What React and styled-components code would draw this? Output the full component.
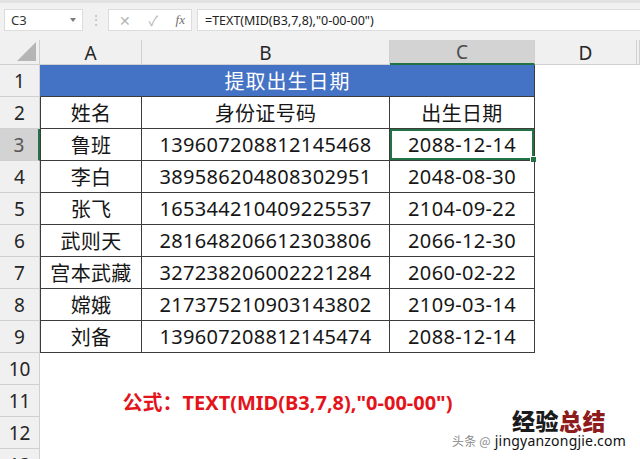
import React from 'react';
import styled, { createGlobalStyle, css } from 'styled-components';

const GlobalStyle = createGlobalStyle`
  html, body {
    margin: 0;
    padding: 0;
    background: #ffffff;
    overflow: hidden;
  }
  body {
    font-family: "Noto Sans", "Noto Sans CJK SC", sans-serif;
    color: #1f1f1f;
  }
`;

const GREEN = '#217346';
const LINE = '#3c3c3c';
const HEAD_LINE = '#d0d0d0';

const Page = styled.div`
  position: relative;
  width: 640px;
  height: 459px;
  overflow: hidden;
  display: flex;
  flex-direction: column;
`;

const FormulaBar = styled.div`
  flex-shrink: 0;
  display: flex;
  align-items: flex-start;
  height: 40px;
  box-sizing: border-box;
  padding: 6px 0 0 4px;
  background: #f1f1f1;
  border-top: 3px solid #e2e2e2;
`;

const NameBox = styled.div`
  display: flex;
  align-items: center;
  justify-content: space-between;
  width: 79px;
  height: 22px;
  box-sizing: border-box;
  padding: 0 6px 0 6px;
  background: #fff;
  border: 1px solid #dcdcdc;
  font-size: 13px;
  color: #333;
`;

const Caret = styled.span`
  width: 0;
  height: 0;
  border-left: 3px solid transparent;
  border-right: 3px solid transparent;
  border-top: 4px solid #7a7a7a;
`;

const Grip = styled.span`
  width: 25px;
  line-height: 22px;
  text-align: center;
  color: #b8b8b8;
  font-size: 12px;
`;

const FuncBox = styled.div`
  display: flex;
  align-items: center;
  justify-content: space-between;
  width: 84px;
  height: 22px;
  box-sizing: border-box;
  padding: 0 6px 0 10px;
  background: #fff;
  border: 1px solid #dcdcdc;
  color: #b4b4b4;
  font-size: 14px;
`;

const Fx = styled.span`
  font-family: "Liberation Serif", serif;
  font-style: italic;
  font-size: 13px;
  color: #707070;
`;

const FormulaInput = styled.div`
  flex: 1;
  display: flex;
  align-items: center;
  height: 22px;
  box-sizing: border-box;
  margin-left: 5px;
  padding-left: 7px;
  background: #fff;
  border: 1px solid #dcdcdc;
  border-right: none;
  font-size: 12.5px;
  color: #222;
`;

const Sheet = styled.div`
  flex-shrink: 0;
  display: grid;
  grid-template-columns: 40px 102px 248px 145px 102px 1fr;
  grid-template-rows: 25px repeat(13, 32px);
  font-family: "Noto Sans", "Noto Sans CJK SC", sans-serif;
`;

const Corner = styled.div`
  position: relative;
  background: #f0f0f0;
  border-right: 1px solid ${HEAD_LINE};
  border-bottom: 1px solid ${HEAD_LINE};
  box-sizing: border-box;

  &::after {
    content: '';
    position: absolute;
    right: 3px;
    bottom: 3px;
    width: 0;
    height: 0;
    border-left: 19px solid transparent;
    border-bottom: 19px solid #b5b5b5;
  }
`;

const ColHead = styled.div`
  display: flex;
  align-items: center;
  justify-content: center;
  box-sizing: border-box;
  background: ${p => (p.$active ? '#d3d3d3' : '#f0f0f0')};
  border-right: 1px solid ${HEAD_LINE};
  border-bottom: ${p => (p.$active ? `2px solid ${GREEN}` : `1px solid ${HEAD_LINE}`)};
  font-size: 19px;
  color: ${p => (p.$active ? '#4d4d4d' : '#262626')};
  padding-top: 1px;
`;

const RowHead = styled.div`
  display: flex;
  align-items: center;
  justify-content: center;
  box-sizing: border-box;
  background: ${p => (p.$active ? '#d3d3d3' : '#f0f0f0')};
  border-bottom: 1px solid ${HEAD_LINE};
  border-right: ${p => (p.$active ? `2px solid ${GREEN}` : `1px solid ${HEAD_LINE}`)};
  font-size: 19px;
  color: ${p => (p.$active ? '#555' : '#262626')};
`;

const Cell = styled.div`
  position: relative;
  display: flex;
  align-items: center;
  justify-content: center;
  box-sizing: border-box;
  font-size: 20px;
  letter-spacing: 0.35px;
  color: #161616;
  white-space: nowrap;
  ${p =>
    p.$boxed &&
    css`
      border-right: 1px solid ${LINE};
      border-bottom: 1px solid ${LINE};
    `}
  ${p =>
    p.$first &&
    css`
      border-left: 1px solid ${LINE};
    `}
  ${p =>
    p.$selected &&
    css`
      box-shadow: inset 0 0 0 2px ${GREEN};
    `}
`;

const Handle = styled.span`
  position: absolute;
  right: -3px;
  bottom: -3px;
  width: 5px;
  height: 5px;
  background: ${GREEN};
  border: 1px solid #fff;
`;

const Title = styled(Cell)`
  grid-column: span 3;
  background: #4472c4;
  color: #ffffff;
  border-left: 1px solid #4472c4;
  letter-spacing: 1px;
`;

const Formula = styled.div`
  grid-column: span 3;
  display: flex;
  align-items: center;
  justify-content: center;
  font-size: 20px;
  font-weight: 700;
  color: #e4141b;
  white-space: nowrap;
  padding-top: 1px;
`;

const Watermark = styled.div`
  position: absolute;
  right: 14px;
  bottom: 10px;
  display: flex;
  flex-direction: column;
  align-items: flex-end;
`;

const Brand = styled.div`
  margin-right: 20px;
  font-family: "Noto Sans CJK SC", sans-serif;
  font-weight: 900;
  font-size: 23px;
  line-height: 24px;
  letter-spacing: 0.5px;
  color: #1b1b1b;

  span {
    color: #8f1c1c;
  }
`;

const Site = styled.div`
  display: flex;
  align-items: baseline;
  gap: 2px;
  margin-top: 1px;
  font-size: 14px;
  line-height: 16px;
  color: #111;
  letter-spacing: 0.2px;
`;

const Faint = styled.span`
  font-family: "Noto Sans CJK SC", sans-serif;
  font-size: 12px;
  color: #8a8a8a;
  margin-right: 2px;
`;

const people = [
  ['姓名', '身份证号码', '出生日期'],
  ['鲁班', '139607208812145468', '2088-12-14'],
  ['李白', '389586204808302951', '2048-08-30'],
  ['张飞', '165344210409225537', '2104-09-22'],
  ['武则天', '281648206612303806', '2066-12-30'],
  ['宫本武藏', '327238206002221284', '2060-02-22'],
  ['嫦娥', '217375210903143802', '2109-03-14'],
  ['刘备', '139607208812145474', '2088-12-14'],
];

const columns = ['A', 'B', 'C', 'D', ''];

const EmptyRow = ({ n }) => (
  <>
    <RowHead>{n}</RowHead>
    <Cell />
    <Cell />
    <Cell />
    <Cell />
    <Cell />
  </>
);

export default function App() {
  return (
    <Page>
      <GlobalStyle />
      <FormulaBar>
        <NameBox>
          C3
          <Caret />
        </NameBox>
        <Grip>⋮</Grip>
        <FuncBox>
          <span>✕</span>
          <span>✓</span>
          <Fx>fx</Fx>
        </FuncBox>
        <FormulaInput>=TEXT(MID(B3,7,8),"0-00-00")</FormulaInput>
      </FormulaBar>

      <Sheet>
        <Corner />
        {columns.map((col, i) => (
          <ColHead key={i} $active={col === 'C'}>
            {col}
          </ColHead>
        ))}

        <RowHead>1</RowHead>
        <Title $boxed $first>
          提取出生日期
        </Title>
        <Cell />
        <Cell />

        {people.map((row, r) => {
          const rowNo = r + 2;
          return (
            <React.Fragment key={rowNo}>
              <RowHead $active={rowNo === 3}>{rowNo}</RowHead>
              {row.map((value, c) => (
                <Cell
                  key={c}
                  $boxed
                  $first={c === 0}
                  $selected={rowNo === 3 && c === 2}
                >
                  {value}
                  {rowNo === 3 && c === 2 && <Handle />}
                </Cell>
              ))}
              <Cell />
              <Cell />
            </React.Fragment>
          );
        })}

        <EmptyRow n={10} />

        <RowHead>11</RowHead>
        <Formula>公式：TEXT(MID(B3,7,8),"0-00-00")</Formula>
        <Cell />
        <Cell />

        <EmptyRow n={12} />
        <EmptyRow n={13} />
      </Sheet>

      <Watermark>
        <Brand>
          经验<span>总结</span>
        </Brand>
        <Site>
          <Faint>头条 @</Faint>
          jingyanzongjie.com
        </Site>
      </Watermark>
    </Page>
  );
}
